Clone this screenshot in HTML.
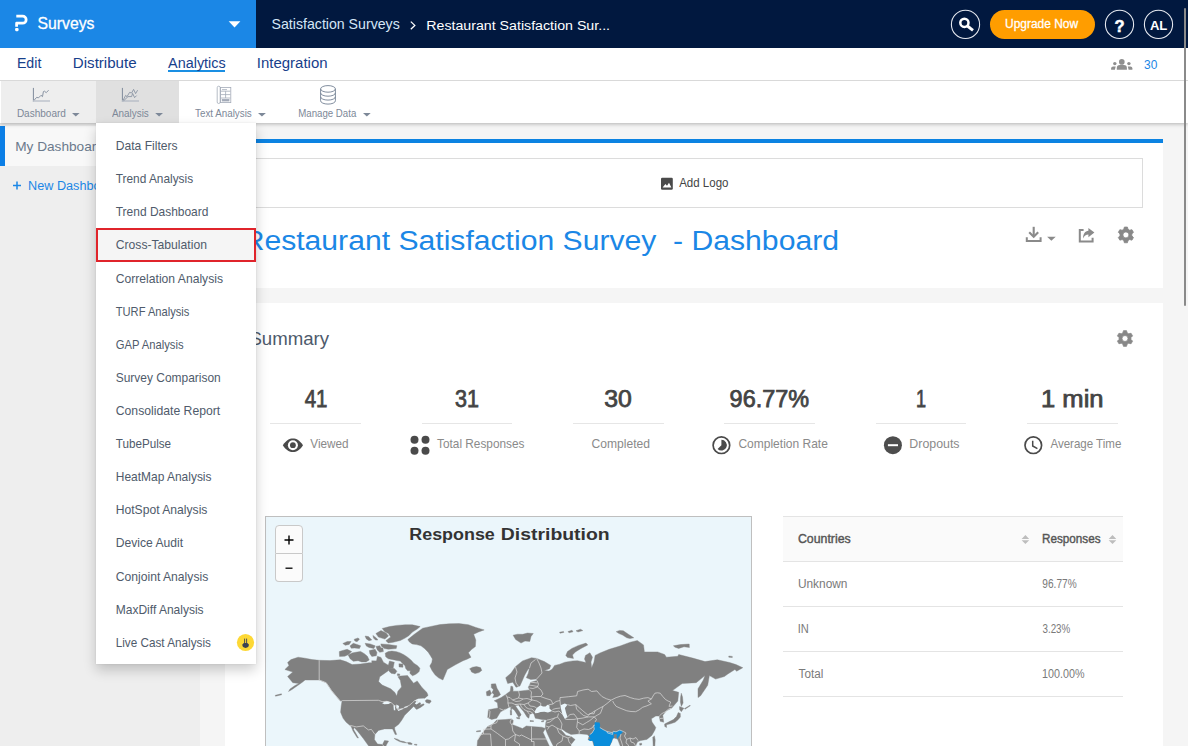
<!DOCTYPE html>
<html lang="en">
<head>
<meta charset="utf-8">
<title>Restaurant Satisfaction Survey - Dashboard</title>
<style>
*{box-sizing:border-box;margin:0;padding:0}
html,body{width:1188px;height:746px;overflow:hidden;background:#f5f5f5;font-family:"Liberation Sans",sans-serif}
.abs{position:absolute}
.t{position:absolute;white-space:pre;line-height:1;transform-origin:0 0;display:block}
#topbar{position:absolute;left:0;top:0;width:1188px;height:48px;background:#01183f}
#brand{position:absolute;left:0;top:0;width:256px;height:48px;background:#1b87e6}
#nav{position:absolute;left:0;top:48px;width:1188px;height:33px;background:#fff;border-bottom:1px solid #d9d9d9}
#toolbar{position:absolute;left:0;top:81px;width:1188px;height:42px;background:#fff;box-shadow:0 1px 4px rgba(0,0,0,.28)}
#sidebar{position:absolute;left:0;top:123px;width:200px;height:623px;background:#eeeeee}
#card1{position:absolute;left:225px;top:139px;width:938px;height:149px;background:#fff;border-top:4px solid #0c83e2}
#card2{position:absolute;left:225px;top:303px;width:938px;height:460px;background:#fff}
#logo{position:absolute;left:245px;top:158px;width:898px;height:50px;border:1px solid #dcdcdc;background:#fff}
.hr{position:absolute;height:1px;background:#e6e6e6}
#dropdown{position:absolute;left:96px;top:123px;width:160px;height:540.5px;background:#fff;box-shadow:0 6px 12px rgba(0,0,0,.2), 0 0 2px rgba(0,0,0,.08)}
#dd-sel{position:absolute;left:0;top:105px;width:160px;height:34px;background:#f5f5f5;border:2px solid #e0242b}
#map{position:absolute;left:265px;top:516px;width:487px;height:240px;background:#ebf6fb;border:1px solid #bfbfbf;overflow:hidden}
.zb{position:absolute;left:8.5px;width:28px;height:28px;background:#fbfbfb;border:1px solid #c9c9c9}
#tbl-head{position:absolute;left:783px;top:516px;width:340px;height:46px;background:#fafafa;border-top:1px solid #e4e4e4;border-bottom:1px solid #e4e4e4}
svg{position:absolute;left:0;top:0;overflow:visible}
</style>
</head>
<body>
<!-- ===== top bar ===== -->
<div id="topbar">
  <div id="brand"></div>
</div>
<!-- ===== page body backgrounds ===== -->
<div id="sidebar">
  <div class="abs" style="left:0;top:3px;width:200px;height:40px;background:#f8f8f8"></div>
  <div class="abs" style="left:0;top:3px;width:5px;height:40px;background:#0c7fe6"></div>
</div>
<div id="card1"></div>
<div id="logo"></div>
<div id="card2"></div>
<!-- stat underlines -->
<div class="hr" style="left:270px;top:423px;width:91px"></div>
<div class="hr" style="left:422px;top:423px;width:90px"></div>
<div class="hr" style="left:573px;top:423px;width:91px"></div>
<div class="hr" style="left:724px;top:423px;width:91px"></div>
<div class="hr" style="left:876px;top:423px;width:90px"></div>
<div class="hr" style="left:1027px;top:423px;width:91px"></div>
<!-- table -->
<div id="tbl-head"></div>
<div class="hr" style="left:783px;top:606px;width:340px;background:#e4e4e4"></div>
<div class="hr" style="left:783px;top:651px;width:340px;background:#e4e4e4"></div>
<div class="hr" style="left:783px;top:696px;width:340px;background:#e4e4e4"></div>
<!-- map -->
<div id="map">
<svg width="485" height="238" viewBox="266 517 485 238" style="position:absolute;left:0;top:0">
<g fill="#808080" stroke="#808080" stroke-width="0.4" stroke-linejoin="round">
<path d="M287.6 662.5L291.0 659.6L298.1 657.2L305.0 658.2L312.0 659.6L319.2 660.3L330.0 660.6L340.3 659.8L346.0 661.6L352.1 664.6L360.5 664.0L369.0 662.8L376.2 662.8L377.4 656.2L381.0 657.4L383.4 662.2L388.3 665.2L389.5 661.0L394.3 662.2L393.1 668.3L389.5 668.3L388.3 670.7L379.8 676.7L378.6 681.5L382.2 685.1L390.7 688.8L394.9 692.4L396.7 696.0L397.9 691.2L401.5 686.9L400.3 680.3L397.9 676.7L400.3 676.1L407.5 675.5L411.2 680.3L413.6 683.3L417.2 680.9L422.0 687.6L426.9 692.4L428.1 695.4L424.4 698.4L417.9 699.1L420.9 704.1L415.9 708.2L413.5 706.5L408.8 711.2L404.7 715.3L401.7 720.3L398.7 724.3L394.6 727.4L394.8 729.5L396.7 734.4L395.2 734.6L392.6 728.9L384.5 728.9L378.5 730.4L374.9 734.4L374.4 739.5L377.5 744.0L382.5 744.5L384.5 740.5L388.6 741.0L386.6 744.5L385.6 747.0L369.4 747.0L363.3 738.5L357.8 731.5L354.2 727.4L353.6 729.5L356.8 735.0L358.5 738.0L357.2 737.8L353.0 731.0L351.2 726.4L346.2 722.3L343.1 718.3L340.6 712.2L341.2 706.0L342.1 700.6L340.3 701.1L336.0 696.0L331.5 690.6L328.5 686.0L326.2 682.7L319.2 680.0L312.0 680.0L305.1 680.0L302.0 682.5L297.0 686.0L292.0 689.5L288.5 691.5L290.0 689.0L295.0 685.5L299.0 683.5L292.8 682.7L287.6 676.5L292.8 672.1L284.9 669.5L289.0 665.5z"/>
<path d="M275.3 695.3L281.4 693.8L281.6 694.8L275.5 696.2z"/>
<path d="M426.9 699.6L430.5 700.2L431.2 701.6L429.3 703.4L426.2 702.6L425.2 700.8z"/>
<path d="M415.5 708.2L418.5 705.8L423.5 703.8L424.2 704.8L420.5 707.4L416.6 709.4z"/>
<path d="M394.1 738.3L397.5 739.2L400.7 740.9L404.0 741.6L406.8 742.9L403.0 742.6L399.5 741.6L395.6 739.6z"/>
<path d="M407.3 742.6L410.0 742.4L412.2 743.6L411.8 744.6L408.5 744.2z"/>
<path d="M414.5 744.2L417.0 744.4L417.0 745.2L414.5 745.0z"/>
<path d="M382.2 628.4L389.5 626.6L396.7 625.4L405.1 624.8L412.4 624.8L420.2 626.6L417.2 629.0L412.4 632.1L408.8 635.7L405.1 638.1L400.3 640.5L393.1 642.3L388.3 642.9L385.8 640.7L390.7 636.9L388.3 633.5L384.6 631.5z"/>
<path d="M375.9 633.5L381.0 630.6L386.1 633.0L388.5 635.9L384.9 639.1L378.4 637.1z"/>
<path d="M380.8 643.9L388.3 644.5L396.9 645.7L396.2 648.6L388.3 649.2L384.4 648.6L381.4 646.2z"/>
<path d="M365.1 636.0L368.5 636.6L371.8 639.9L369.0 640.7L366.3 638.9z"/>
<path d="M372.9 635.4L376.3 637.9L377.9 640.0L375.5 640.1L373.5 638.1z"/>
<path d="M354.2 639.3L358.1 637.9L359.5 639.3L357.0 641.7L354.8 640.9z"/>
<path d="M342.8 643.5L347.2 641.5L351.1 641.5L349.2 644.4L345.3 645.3z"/>
<path d="M350.0 645.9L353.3 643.3L357.0 644.5L360.7 645.8L359.4 648.6L354.5 648.0L351.3 648.2z"/>
<path d="M365.1 643.3L370.2 643.9L375.2 645.8L373.9 648.6L369.0 647.4L366.4 646.1z"/>
<path d="M375.9 646.4L379.9 645.7L381.3 649.1L377.3 649.8z"/>
<path d="M339.3 651.6L343.6 650.2L347.2 649.3L351.7 651.6L348.6 654.6L344.8 656.2L339.5 656.4z"/>
<path d="M348.2 655.0L352.1 652.9L355.7 652.3L360.6 651.4L364.4 653.7L367.4 656.2L369.2 659.9L366.1 661.9L361.7 661.9L358.1 660.7L353.3 661.3L350.1 658.7z"/>
<path d="M369.3 650.6L375.1 649.3L377.0 652.6L376.3 655.8L371.8 656.4L369.9 653.8z"/>
<path d="M371.7 660.8L378.6 661.0L378.8 663.4L372.1 663.7z"/>
<path d="M377.4 647.5L382.9 648.0L383.4 651.6L379.8 652.3L377.6 650.2z"/>
<path d="M385.2 653.2L388.3 651.6L391.9 651.1L396.7 651.7L400.3 652.9L403.9 654.7L407.6 657.2L411.2 660.2L413.8 663.2L417.4 665.6L419.9 668.3L419.1 671.5L417.3 673.3L414.9 674.8L412.4 675.7L409.8 673.2L410.4 670.8L407.6 670.8L405.6 668.3L405.0 665.8L402.6 663.4L400.2 661.1L396.7 660.5L394.3 659.9L390.7 659.3L388.3 658.7L385.7 656.8z"/>
<path d="M398.9 663.8L402.8 664.1L403.0 667.2L399.1 667.0z"/>
<path d="M389.2 668.0L394.4 668.6L396.9 671.3L395.0 673.9L391.1 673.3L388.7 670.7z"/>
<path d="M397.4 673.8L399.8 674.0L399.6 675.7L397.4 675.5z"/>
<path d="M407.8 639.6L414.0 634.5L422.7 628.2L432.0 626.2L440.0 624.6L449.1 623.8L459.0 623.6L468.4 624.7L476.0 627.5L484.2 629.9L478.5 632.0L473.7 634.3L475.8 640.0L475.4 646.6L471.5 649.5L468.4 652.8L471.0 657.2L467.0 659.2L463.1 660.7L455.0 665.0L447.3 669.5L445.0 675.0L442.9 680.0L438.5 677.8L435.0 674.8L432.0 670.5L429.8 666.0L431.8 662.5L432.4 658.9L430.0 655.0L428.0 651.9L424.5 648.5L421.0 645.8L416.5 644.6L412.2 644.0L409.2 641.8z"/>
<path d="M469.6 668.8L472.5 667.2L476.5 666.6L480.5 667.6L481.8 670.4L479.0 672.6L475.0 673.6L471.5 672.0L470.8 670.2z"/>
<path d="M513.1 635.2L517.5 634.2L522.7 634.3L527.5 633.0L533.3 633.5L531.0 636.5L529.8 641.4L525.0 641.0L521.0 643.1L518.0 641.0L515.7 639.6z"/>
<path d="M559.6 632.2L563.5 631.4L563.8 632.4L560.0 633.2z"/>
<path d="M568.0 631.6L572.0 630.2L573.0 631.8L569.0 632.8z"/>
<path d="M576.0 630.8L580.5 629.2L582.8 630.6L578.0 632.0z"/>
<path d="M565.8 655.4L567.5 651.5L571.9 648.4L578.5 645.4L586.0 643.1L587.8 644.9L581.0 648.5L575.4 651.9L572.5 655.0L573.5 658.4L571.0 658.1L567.5 657.4z"/>
<path d="M616.2 631.7L619.5 630.4L623.3 630.8L628.0 634.0L633.8 637.8L630.0 638.6L626.8 637.8L622.5 635.0L619.0 633.6z"/>
<path d="M673.4 645.8L680.4 644.6L689.2 644.0L689.4 647.5L684.0 646.8L678.7 648.4L675.0 647.2z"/>
<path d="M728.8 656.0L732.3 656.4L732.3 657.6L728.8 657.2z"/>
<path d="M510.9 686.0L510.2 691.2L505.7 694.4L501.2 697.6L494.2 700.8L497.4 702.8L498.0 707.9L488.4 709.8L487.7 717.6L491.6 719.5L496.7 718.2L500.6 711.8L505.7 709.2L509.0 707.3L512.2 706.6L515.5 709.5L518.6 713.1L520.5 715.6L518.6 716.9L516.5 713.5L514.7 710.5L514.7 706.0L518.6 705.3L521.0 708.5L523.8 711.8L527.0 716.9L528.9 718.2L529.5 714.4L532.8 713.1L534.1 714.4L535.3 718.2L541.8 719.5L546.9 720.1L545.8 722.5L545.3 728.4L547.5 734.0L550.5 740.5L553.8 747.0L571.0 747.0L571.0 744.5L575.1 739.5L571.0 736.5L566.0 735.5L563.0 732.0L561.0 729.9L561.9 728.9L566.0 732.0L571.0 734.4L579.1 733.8L587.2 734.4L589.0 736.3L588.1 739.8L592.5 740.7L594.3 747.0L609.2 747.0L611.8 741.5L612.7 738.5L614.0 738.0L617.5 739.0L618.5 741.5L620.6 747.0L635.5 747.0L636.0 745.0L637.5 741.8L640.7 740.6L646.8 739.4L651.8 735.4L654.8 730.3L655.8 727.5L652.0 722.0L651.4 718.7L655.8 716.0L659.3 716.0L660.2 721.3L663.7 722.2L662.8 715.2L666.4 710.8L671.6 708.2L677.8 701.1L678.7 692.3L672.5 690.6L682.2 683.5L696.2 682.7L705.0 675.6L703.3 680.0L698.0 688.8L698.0 697.6L700.6 695.8L707.7 685.3L709.4 675.6L715.6 679.1L724.4 676.5L727.9 673.9L734.9 669.5L736.7 671.2L742.8 667.7L736.0 664.6L729.6 662.5L717.3 659.8L705.0 661.6L692.7 658.1L678.7 654.5L677.8 656.3L666.4 657.2L664.6 654.5L657.6 651.9L644.4 651.9L643.5 644.9L637.3 640.5L630.3 642.2L620.0 646.0L609.2 649.3L600.0 653.0L595.1 655.4L594.0 662.0L591.6 667.7L591.0 662.0L592.5 657.2L589.9 652.8L585.5 655.4L584.5 659.0L586.0 662.5L577.6 660.7L572.7 660.9L564.9 662.2L559.8 664.2L554.6 665.4L552.1 669.3L549.0 671.0L544.4 670.6L549.5 668.7L550.8 665.4L544.4 661.6L536.6 658.4L531.5 657.7L522.5 660.9L515.4 666.7L510.9 673.2L505.7 677.7L507.7 683.5L512.8 682.2L516.0 687.3L519.9 686.0L522.5 680.2L524.4 675.7L527.6 669.9L529.5 668.0L528.3 673.2L526.3 677.7L530.8 679.6L536.6 679.0L537.0 680.5L530.8 682.2L528.3 687.3L529.5 689.9L518.6 691.2L512.8 691.2L513.2 689.9L512.8 686.7z"/>
<path d="M491.3 684.0L495.6 683.8L497.0 688.3L499.1 691.8L500.5 694.7L497.7 696.8L492.7 697.5L494.1 694.7L492.0 692.6L493.4 689.7L491.3 687.6z"/>
<path d="M486.3 691.8L489.9 690.0L491.3 693.3L489.9 695.7L486.8 695.7z"/>
<path d="M511.2 706.8L515.5 706.0L519.0 711.0L521.1 714.6L519.7 716.7L518.3 713.9L514.7 710.3L512.6 708.9z"/>
<path d="M516.5 717.4L519.8 717.6L519.5 719.0L516.8 718.4z"/>
<path d="M510.3 710.2L511.6 710.4L511.6 715.0L510.4 715.0z"/>
<path d="M510.8 707.2L511.8 707.2L511.8 709.6L510.8 709.6z"/>
<path d="M530.0 720.6L533.5 720.8L533.5 721.5L530.0 721.4z"/>
<path d="M541.5 721.0L544.0 720.6L543.5 721.8L541.5 721.8z"/>
<path d="M496.7 720.1L505.7 719.5L511.5 718.9L513.5 720.8L512.2 724.6L516.0 725.9L522.5 728.5L526.3 725.9L531.5 726.6L541.8 727.2L545.3 728.4L543.1 732.4L546.5 740.0L549.8 747.0L477.0 747.0L477.6 740.5L482.1 733.4L487.7 726.4L492.9 724.0z"/>
<path d="M476.5 731.0L480.5 730.6L480.5 731.5L476.5 731.8z"/>
<path d="M681.3 693.2L682.5 697.0L683.1 702.9L681.3 706.4L680.4 702.0L680.6 697.0z"/>
<path d="M679.5 706.6L683.9 708.2L682.5 710.0L681.3 711.7L679.6 709.6z"/>
<path d="M678.2 712.6L680.3 713.4L680.4 716.9L678.0 719.8L675.1 722.2L670.5 723.8L666.4 724.8L666.6 727.5L664.8 726.6L664.6 724.0L669.0 721.8L673.4 719.6L676.5 716.5z"/>
<path d="M684.5 708.6L690.0 705.2L690.3 705.8L685.0 709.2z"/>
<path d="M652.8 737.4L654.4 735.8L655.2 740.0L654.8 747.0L653.2 747.0z"/>
<path d="M639.6 743.4L641.6 743.2L641.6 745.0L639.8 745.2z"/>
</g>
<path d="M594.3 724.8L595.1 722.2L599.5 722.6L600.2 725.0L599.8 727.5L603.0 729.5L607.0 731.5L612.7 732.8L613.2 731.3L616.0 731.8L619.8 730.1L623.3 731.5L621.0 734.0L618.9 736.5L617.5 739.0L616.5 737.0L617.0 734.5L614.5 734.0L613.6 735.5L614.0 738.0L612.7 738.5L611.8 741.5L609.2 747.0L594.3 747.0L593.5 742.5L592.5 740.7L590.0 741.0L588.1 739.8L590.5 738.5L589.0 736.3L589.9 734.5L592.0 733.0L594.3 729.2L593.8 726.5z" fill="#0a8ddb"/>
<g fill="#ebf6fb">
<path d="M382.1 703.2L384.5 701.8L387.0 701.1L391.3 702.5L388.5 703.9L384.2 704.2z"/>
<path d="M393.4 705.3L394.9 705.3L395.3 710.3L393.9 710.3z"/>
<path d="M396.3 704.6L399.1 706.0L398.4 708.9L396.3 708.2z"/>
<path d="M397.7 709.9L402.7 708.2L403.0 709.1L398.4 710.9z"/>
<path d="M404.1 707.0L407.6 706.0L407.8 706.9L404.5 707.9z"/>
<path d="M414.5 700.8L418.0 698.8L424.6 698.4L422.5 701.0L419.5 702.5L416.5 704.6L414.8 703.4L416.5 701.6z"/>
<path d="M534.6 711.8L536.6 707.9L540.5 705.3L543.0 706.5L545.6 706.6L547.5 704.8L549.5 705.6L549.5 708.6L552.1 711.1L548.0 712.4L544.4 711.8L540.5 712.0L537.9 713.1L535.2 713.2z"/>
<path d="M560.4 705.3L564.9 703.4L567.5 704.7L564.9 707.9L566.0 712.5L567.5 716.9L564.9 718.9L562.4 714.4L561.1 709.2z"/>
</g>
<g fill="none" stroke="#dcdcdc" stroke-width="0.7" stroke-linejoin="round">
<path d="M319.2 660.3L319.2 680.0L322.0 681.0L326.2 682.7L328.5 686.0L331.5 690.6L336.0 696.0L340.3 701.1"/>
<path d="M342.1 700.6L378.5 700.3L382.1 701.6L387.0 701.3L391.3 702.8L394.2 705.3L396.5 706.5L397.5 709.5L402.8 708.6L406.0 707.0L409.5 705.2L412.6 702.5L414.5 700.8L416.9 699.9L418.2 702.8"/>
<path d="M350.2 725.4L356.3 726.9L363.3 725.9L368.4 729.9L371.4 729.4L374.9 734.4"/>
<path d="M382.5 744.5L384.0 746.5"/>
<path d="M515.4 666.7L517.0 672.0L515.0 678.0L516.0 683.0L518.5 686.5"/>
<path d="M529.5 668.0L531.0 663.0L535.5 659.5"/>
<path d="M536.6 658.4L539.0 663.0L541.0 668.0L542.0 673.0L538.5 677.0L536.6 679.0"/>
<path d="M537.0 680.5L538.5 684.0L537.5 687.0L541.0 690.0L543.0 694.0L540.5 696.5L546.0 698.5L551.0 700.0L553.0 704.0L548.5 704.8"/>
<path d="M530.8 682.2L537.5 683.0"/>
<path d="M529.0 685.0L538.0 686.5"/>
<path d="M529.5 688.0L533.0 688.5L537.5 687.0"/>
<path d="M529.5 689.9L531.5 692.0L531.0 697.0L532.0 700.0"/>
<path d="M518.6 691.2L519.5 695.0L518.5 698.0"/>
<path d="M518.5 698.0L523.0 699.0L527.0 698.5L532.0 700.0L537.0 701.0L541.0 703.5L540.5 705.3"/>
<path d="M531.0 697.0L536.0 696.5L540.5 696.5"/>
<path d="M505.7 694.4L507.0 697.0L508.0 700.0L507.9 703.0L509.0 707.3"/>
<path d="M507.0 697.0L510.0 697.5L512.5 700.0L518.5 698.0"/>
<path d="M507.9 703.0L512.0 703.0L515.0 704.5L518.6 705.3"/>
<path d="M512.5 700.0L516.0 701.5L520.0 701.0L523.0 699.0"/>
<path d="M515.0 704.5L520.0 704.0L524.0 704.5L528.0 703.0L532.0 700.0"/>
<path d="M520.0 704.0L521.5 707.0L524.0 709.5L527.0 711.0L529.5 714.4"/>
<path d="M524.0 704.5L526.0 707.5L529.0 709.0L532.0 709.0L534.6 711.8"/>
<path d="M528.0 703.0L530.0 706.0L534.0 706.5L536.6 707.9"/>
<path d="M527.0 711.0L530.0 711.5L532.8 713.1"/>
<path d="M488.4 709.8L490.0 711.5L489.5 717.0L488.5 718.0"/>
<path d="M499.5 708.6L503.5 710.2L505.7 709.2"/>
<path d="M552.1 711.1L555.0 712.0L559.0 711.0L562.4 714.4"/>
<path d="M552.5 709.5L556.0 708.5L560.4 708.0"/>
<path d="M546.9 720.1L550.0 719.5L554.8 718.0L557.5 717.0L558.5 713.5"/>
<path d="M557.5 717.0L560.0 720.0L562.0 724.0L561.0 729.9"/>
<path d="M546.5 723.0L550.0 722.0L554.8 718.0"/>
<path d="M546.0 726.0L549.0 727.0L552.0 725.0L557.0 728.0L561.0 729.9"/>
<path d="M549.0 727.0L547.5 729.5"/>
<path d="M557.0 728.0L559.0 733.0L563.0 736.0L568.0 738.0L571.0 736.5"/>
<path d="M563.0 736.0L562.0 741.0L557.0 744.0L556.0 747.0"/>
<path d="M568.0 738.0L569.0 742.0L571.0 744.5"/>
<path d="M553.0 704.0L556.0 701.5L560.0 700.5L560.0 697.6L568.8 696.7L576.7 695.8L577.6 691.5L583.0 690.0L588.1 689.2L591.6 691.5L596.9 690.9L599.5 694.0L602.2 696.7L606.5 698.8L611.0 700.2"/>
<path d="M560.0 700.5L560.4 705.3"/>
<path d="M567.5 704.7L570.5 705.5L575.8 704.6L579.0 707.5L582.8 710.8L588.1 715.2L591.5 713.0L595.1 710.8L599.0 708.5L603.1 706.4L607.0 703.5L611.0 700.2"/>
<path d="M567.5 716.9L570.0 714.5L574.0 714.0L577.6 718.7L582.0 718.2L588.1 716.9L594.3 716.9"/>
<path d="M575.8 704.6L576.5 709.0L580.0 712.5L583.5 715.5L588.1 716.9"/>
<path d="M564.9 718.9L567.0 719.5L574.0 719.4L577.6 718.7"/>
<path d="M577.6 718.7L577.6 720.5L576.7 727.5L579.3 731.0L579.1 733.8"/>
<path d="M577.6 722.0L582.8 724.8L586.5 722.5L589.9 720.5L594.3 716.9"/>
<path d="M579.3 731.0L584.0 729.0L588.5 729.5L592.0 728.0L594.3 724.8"/>
<path d="M588.1 715.2L590.0 713.5L594.0 713.8L595.1 710.8"/>
<path d="M603.1 706.4L600.4 713.4L597.5 715.0L594.3 716.9L596.5 719.5L595.1 721.9"/>
<path d="M611.0 700.2L616.2 697.6L620.5 696.2L625.0 695.5L630.3 697.6L634.5 698.8L639.1 699.4L643.5 698.2L647.9 697.6L651.4 699.0L647.9 701.1L651.4 703.8L647.0 705.8L642.6 707.3L639.0 710.0L635.6 711.7L631.0 711.5L626.8 710.8L621.0 708.5L616.2 706.4L614.0 703.5L612.7 701.1"/>
<path d="M651.4 699.0L653.0 696.0L654.9 693.2L657.5 692.8L660.2 693.2L662.8 696.5L665.4 699.4L668.0 701.0L670.7 702.0L669.0 706.4L672.5 706.0"/>
<path d="M659.3 716.0L662.0 713.5L666.0 711.5L668.5 709.0L671.6 708.2"/>
<path d="M660.0 718.5L663.2 718.2"/>
<path d="M599.8 727.5L603.0 729.5L607.0 731.5L612.7 732.8L613.2 731.3L616.0 731.8L619.8 730.1L623.3 731.5L626.0 733.0L624.5 736.0L626.5 739.5L630.0 738.0L633.0 739.0L636.0 737.5L638.0 740.5"/>
<path d="M607.0 731.5L607.5 733.0L612.7 734.4L612.7 732.8"/>
<path d="M621.0 734.0L620.0 738.0L621.5 742.0L623.0 747.0"/>
<path d="M626.5 739.5L626.0 743.0L628.5 745.0L628.0 747.0"/>
<path d="M630.0 738.0L631.0 742.0L634.0 743.0L636.0 747.0"/>
<path d="M589.9 734.5L592.0 733.0L594.3 729.2L593.8 726.5L594.3 724.8"/>
<path d="M487.7 726.4L491.0 726.0L492.0 724.2L496.5 722.8L497.8 720.1"/>
<path d="M491.0 726.0L491.0 729.0L483.5 729.2L483.5 734.0L480.0 735.0L478.0 739.5"/>
<path d="M491.0 729.0L497.5 733.5L505.5 739.5L508.5 739.0"/>
<path d="M483.5 734.0L490.5 734.0L491.5 747.0"/>
<path d="M508.5 739.0L513.5 735.5L515.5 734.5"/>
<path d="M511.5 718.9L510.0 722.0L512.0 725.5L512.8 731.0L515.5 734.5L519.5 736.0L521.5 735.0"/>
<path d="M512.2 724.6L513.5 723.0L513.5 720.8"/>
<path d="M521.5 735.0L531.5 740.0L531.5 741.5L534.0 741.5"/>
<path d="M531.5 726.6L531.5 741.5"/>
<path d="M531.5 739.0L548.0 739.0"/>
<path d="M505.5 739.5L505.5 747.0"/>
<path d="M515.5 734.5L514.5 741.0L519.5 744.0L519.5 747.0"/>
<path d="M534.0 741.5L534.0 747.0"/>
</g>
</svg>
  <div class="zb" style="top:8.3px;height:28.5px;border-radius:4px 4px 0 0"></div>
  <div class="zb" style="top:36.8px;border-radius:0 0 4px 4px;border-top:none;height:28px"></div>
</div>
<!-- ===== toolbar (over body so its shadow shows) ===== -->
<div id="toolbar">
  <div class="abs" style="left:1px;top:0;width:95px;height:42px;background:#eeeeee"></div>
  <div class="abs" style="left:96px;top:0;width:83px;height:42px;background:#e0e0e0"></div>
</div>
<!-- ===== nav tabs ===== -->
<div id="nav"></div>
<div class="abs" style="left:168px;top:70px;width:57px;height:2px;background:#1a8fe3"></div>
<!-- ===== icons (single svg overlay) ===== -->
<svg width="1188" height="746" viewBox="0 0 1188 746" id="icons">
<!-- P logo -->
<path d="M16.3 16.1H22.6a3.55 3.55 0 0 1 0 7.1H16.6V26.7" fill="none" stroke="#fff" stroke-width="2.75" stroke-linejoin="round"/>
<rect x="15.1" y="27.9" width="3.5" height="3.3" rx="1.1" fill="#fff"/>
<!-- brand caret -->
<path d="M228.7 21.3H240.4L234.55 27.4z" fill="#fff"/>
<!-- breadcrumb chevron -->
<path d="M410.8 21.6L414.8 25.4L410.8 29.2" fill="none" stroke="#fff" stroke-width="1.3"/>
<!-- search -->
<circle cx="965.5" cy="24.4" r="14.1" fill="none" stroke="#e6e9f0" stroke-width="1.1"/>
<circle cx="964.4" cy="22.8" r="4.1" fill="none" stroke="#fff" stroke-width="2.5"/>
<path d="M967.4 26L973 30.4" stroke="#fff" stroke-width="2.9" stroke-linecap="butt"/>
<!-- upgrade button -->
<rect x="990" y="10" width="105" height="29" rx="14.5" fill="#ff9d00"/>
<!-- help -->
<circle cx="1119.5" cy="24.4" r="14.1" fill="none" stroke="#e6e9f0" stroke-width="1.1"/>
<text x="1119.5" y="32" font-family="Liberation Sans, sans-serif" font-weight="700" font-size="16.5" fill="#fff" stroke="#fff" stroke-width="0.5" text-anchor="middle">?</text>
<!-- avatar -->
<circle cx="1158.5" cy="24.4" r="14.1" fill="none" stroke="#e6e9f0" stroke-width="1.1"/>
<!-- people -->
<g fill="#8e8e8e">
<circle cx="1121.8" cy="61.9" r="2.8"/>
<path d="M1116.8 69.7V68a3 3 0 0 1 3-3h4.1a3 3 0 0 1 3 3v1.7z"/>
<circle cx="1114.8" cy="63.6" r="1.7"/>
<circle cx="1128.9" cy="63.6" r="1.7"/>
<path d="M1111.1 69.7V68.5a2 2 0 0 1 2-2h2.6l-0.8 3.2z"/>
<path d="M1132.4 69.7V68.5a2 2 0 0 0-2-2h-2.6l0.8 3.2z"/>
</g>
<!-- toolbar: dashboard icon -->
<g fill="none" stroke="#7f8a9b" stroke-width="0.9">
<path d="M33.4 87.9V102" stroke-width="1"/>
<path d="M33 101H50" stroke="#c6cad2" stroke-width="1.8"/>
<path d="M34 100.4L36.6 97.4L38.6 97.8L41 95.3L42.5 96.6L43.4 91.6L44.6 91.2L46.2 92.7L48.6 90.2"/>
</g>
<!-- toolbar: analysis icon -->
<g fill="none" stroke="#7f8a9b" stroke-width="0.8">
<path d="M122.4 87.9V102" stroke-width="1"/>
<path d="M122 101H139" stroke="#c0c4cc" stroke-width="1.8"/>
<path d="M123 100.6L125.6 95.4L127 96.6L129.6 92.4L131.6 93L133.6 89.4L135.6 93.6L137.6 90.2"/>
<path d="M123.6 100.8L128 96.6H131.6L132.6 93.4L134.6 97.6L136.6 95.6"/>
</g>
<!-- toolbar: text analysis icon -->
<g fill="none" stroke="#a3abb8" stroke-width="0.8">
<rect x="217.2" y="86.2" width="3" height="17.3" rx="1.5"/>
<rect x="220.4" y="87.4" width="10.4" height="15.2"/>
<path d="M222 89.6H227M221 91.2H230.4M221 98H230.4M225.6 91.2V98M221 94.6H230.4"/>
<rect x="222.2" y="99.4" width="6.8" height="1.6" fill="#a3abb8"/>
</g>
<!-- toolbar: manage data icon -->
<g fill="none" stroke="#7a8799" stroke-width="0.95">
<ellipse cx="328" cy="88.9" rx="7.4" ry="3.3"/>
<path d="M320.6 88.9V100.8M335.4 88.9V100.8"/>
<path d="M320.6 92.9a7.4 3.3 0 0 0 14.8 0M320.6 96.8a7.4 3.3 0 0 0 14.8 0M320.6 100.8a7.4 3.3 0 0 0 14.8 0"/>
</g>
<!-- toolbar carets -->
<g fill="#7d8898">
<path d="M72 112.9H79.6L75.8 116.5z"/>
<path d="M155.2 112.9H163L159.1 116.5z"/>
<path d="M258 112.9H265.9L261.95 116.5z"/>
<path d="M363 112.9H370.7L366.85 116.5z"/>
</g>
<!-- sidebar plus -->
<path d="M13 185.6H21M17 181.6V189.6" stroke="#1b87e6" stroke-width="1.5" fill="none"/>
<!-- add logo icon -->
<rect x="661" y="177.8" width="11.8" height="12" rx="1.2" fill="#4a4a4a"/>
<path d="M662.6 187.6L665.4 184L667 185.8L669 182.8L671.4 187.6z" fill="#fff"/>
<!-- download -->
<g fill="none" stroke="#8a8a8a" stroke-width="2.1">
<path d="M1033.7 226.8V236"/>
<path d="M1029.2 232.2L1033.7 236.7L1038.2 232.2"/>
<path d="M1026.8 237.2V241H1040.6V237.2" stroke-width="2"/>
</g>
<path d="M1047.1 236.8H1055.7L1051.4 240.7z" fill="#8a8a8a"/>
<!-- share -->
<g fill="none" stroke="#8a8a8a" stroke-width="2">
<path d="M1083.6 230H1079.8V241.6H1092.6V237.8"/>
</g>
<path d="M1088.4 228L1094.4 232.6L1088.4 237.2V234.4C1086 234.4 1084.2 235.6 1083 238.4C1083.2 233.8 1085 231.2 1088.4 230.8z" fill="#8a8a8a"/>
<!-- gears -->
<path d="M1128.05 229.30L1127.43 227.05L1124.37 227.05L1123.75 229.30L1122.12 230.24L1119.86 229.65L1118.34 232.30L1119.97 233.96L1119.97 235.84L1118.34 237.50L1119.86 240.15L1122.12 239.56L1123.75 240.50L1124.37 242.75L1127.43 242.75L1128.05 240.50L1129.68 239.56L1131.94 240.15L1133.46 237.50L1131.83 235.84L1131.83 233.96L1133.46 232.30L1131.94 229.65L1129.68 230.24zM1122.90 234.90a3.0 3.0 0 1 0 6.0 0a3.0 3.0 0 1 0 -6.0 0z" fill="#888" fill-rule="evenodd" stroke="#888" stroke-width="0.8" stroke-linejoin="round"/>
<path d="M1127.15 332.90L1126.53 330.65L1123.47 330.65L1122.85 332.90L1121.22 333.84L1118.96 333.25L1117.44 335.90L1119.07 337.56L1119.07 339.44L1117.44 341.10L1118.96 343.75L1121.22 343.16L1122.85 344.10L1123.47 346.35L1126.53 346.35L1127.15 344.10L1128.78 343.16L1131.04 343.75L1132.56 341.10L1130.93 339.44L1130.93 337.56L1132.56 335.90L1131.04 333.25L1128.78 333.84zM1122.00 338.50a3.0 3.0 0 1 0 6.0 0a3.0 3.0 0 1 0 -6.0 0z" fill="#888" fill-rule="evenodd" stroke="#888" stroke-width="0.8" stroke-linejoin="round"/>
<!-- eye -->
<path d="M282.8 445.2C286 440.2 289.4 438.4 292.9 438.4S299.8 440.2 303 445.2C299.8 450.2 296.4 452 292.9 452S286 450.2 282.8 445.2z" fill="#4a4a4a"/>
<circle cx="292.9" cy="445.2" r="5" fill="#fff"/>
<circle cx="292.9" cy="445.2" r="2.9" fill="#4a4a4a"/>
<!-- 4 dots -->
<g fill="#4a4a4a"><circle cx="414.5" cy="439.7" r="4"/><circle cx="425.5" cy="439.7" r="4"/><circle cx="414.5" cy="450.7" r="4"/><circle cx="425.5" cy="450.7" r="4"/></g>
<!-- completion -->
<circle cx="721.4" cy="445.2" r="8.3" fill="none" stroke="#4a4a4a" stroke-width="1.7"/>
<path d="M721.4 445.2V439.8A5.4 5.4 0 1 1 717.6 449z" fill="#4a4a4a"/>
<!-- dropouts -->
<circle cx="892.9" cy="445.2" r="9" fill="#4d4d4d"/>
<rect x="887.9" y="444.2" width="10.1" height="2" fill="#fff"/>
<!-- clock -->
<circle cx="1033.3" cy="445.2" r="8.3" fill="none" stroke="#4a4a4a" stroke-width="1.7"/>
<path d="M1032.7 440.8V446L1037.4 448.6" fill="none" stroke="#4a4a4a" stroke-width="1.5"/>
<!-- sort icons -->
<g fill="#bdbdbd">
<path d="M1021.6 539H1029.2L1025.4 534.9zM1021.6 540.2H1029.2L1025.4 544z"/>
<path d="M1108.7 539H1116.3L1112.5 534.9zM1108.7 540.2H1116.3L1112.5 544z"/>
</g>
<!-- zoom +/- -->
<path d="M284.5 540H293.5M289 535.5V544.5" stroke="#000" stroke-width="1.4" fill="none"/>
<path d="M285.5 568.2H292.5" stroke="#000" stroke-width="1.3" fill="none"/>

</svg>
<!-- ===== text ===== -->
<span class="t" style="left:37px;top:14px;line-height:18px;font-size:16.5px;font-weight:400;color:#fff;transform:translateX(0.51px) scaleX(0.9561);-webkit-text-stroke:0.3px #fff;">Surveys</span>
<span class="t" style="left:271px;top:16px;line-height:16px;font-size:14.8px;font-weight:400;color:#d5e6f7;transform:translateX(0.56px) scaleX(0.9560);">Satisfaction Surveys</span>
<span class="t" style="left:426px;top:18px;line-height:15px;font-size:13.7px;font-weight:400;color:#fff;transform:translateX(0.29px) scaleX(1.0364);">Restaurant Satisfaction Sur...</span>
<span class="t" style="left:1005px;top:17px;line-height:14px;font-size:12.5px;font-weight:400;color:#fff;transform:translateX(0.09px) scaleX(0.9556);-webkit-text-stroke:0.3px #fff;">Upgrade Now</span>
<span class="t" style="left:1149px;top:19px;line-height:14px;font-size:12.7px;font-weight:700;color:#fff;transform:translateX(0.89px) scaleX(1.0325);">AL</span>
<span class="t" style="left:16px;top:55px;line-height:16px;font-size:14px;font-weight:400;color:#17408b;transform:translateX(0.89px) scaleX(1.0139);">Edit</span>
<span class="t" style="left:72px;top:55px;line-height:16px;font-size:14px;font-weight:400;color:#17408b;transform:translateX(0.82px) scaleX(1.0788);">Distribute</span>
<span class="t" style="left:168px;top:55px;line-height:16px;font-size:14px;font-weight:400;color:#17408b;transform:translateX(0.10px) scaleX(1.0273);">Analytics</span>
<span class="t" style="left:256px;top:55px;line-height:16px;font-size:14px;font-weight:400;color:#17408b;transform:translateX(0.83px) scaleX(1.0688);">Integration</span>
<span class="t" style="left:1144px;top:58px;line-height:14px;font-size:12.5px;font-weight:400;color:#1b87e6;transform:translateX(0.07px) scaleX(0.9537);">30</span>
<span class="t" style="left:16px;top:107px;line-height:12px;font-size:11px;font-weight:400;color:#7d8898;transform:translateX(0.88px) scaleX(0.9111);">Dashboard</span>
<span class="t" style="left:112px;top:107px;line-height:12px;font-size:11px;font-weight:400;color:#7d8898;transform:translateX(0.00px) scaleX(0.8988);">Analysis</span>
<span class="t" style="left:195px;top:107px;line-height:12px;font-size:11px;font-weight:400;color:#7d8898;transform:translateX(0.02px) scaleX(0.8925);">Text Analysis</span>
<span class="t" style="left:298px;top:107px;line-height:12px;font-size:11px;font-weight:400;color:#7d8898;transform:translateX(0.21px) scaleX(0.8792);">Manage Data</span>
<span class="t" style="left:15px;top:139px;line-height:15px;font-size:13px;font-weight:400;color:#6b7a8c;transform:translateX(0.24px) scaleX(1.0484);">My Dashboard</span>
<span class="t" style="left:28px;top:179px;line-height:14px;font-size:12px;font-weight:400;color:#1b87e6;transform:translateX(0.10px) scaleX(1.0549);">New Dashboard</span>
<span class="t" style="left:679px;top:176px;line-height:14px;font-size:12.2px;font-weight:400;color:#444;transform:translateX(0.20px) scaleX(0.9430);">Add Logo</span>
<span class="t" style="left:242px;top:224px;line-height:32px;font-size:28.2px;font-weight:400;color:#1b87e6;transform:translateX(0.64px) scaleX(1.0691);">Restaurant Satisfaction Survey  - Dashboard</span>
<span class="t" style="left:249px;top:329px;line-height:20px;font-size:17.5px;font-weight:400;color:#4d5a6b;transform:translateX(0.42px) scaleX(1.0643);">Summary</span>
<span class="t" style="left:304px;top:386px;line-height:26px;font-size:23px;font-weight:400;color:#444;transform:translateX(0.68px) scaleX(0.8892);-webkit-text-stroke:0.75px #444;">41</span>
<span class="t" style="left:455px;top:386px;line-height:26px;font-size:23px;font-weight:400;color:#444;transform:translateX(0.03px) scaleX(0.9360);-webkit-text-stroke:0.75px #444;">31</span>
<span class="t" style="left:604px;top:386px;line-height:26px;font-size:23px;font-weight:400;color:#444;transform:translateX(0.22px) scaleX(1.0786);-webkit-text-stroke:0.75px #444;">30</span>
<span class="t" style="left:729px;top:386px;line-height:26px;font-size:23px;font-weight:400;color:#444;transform:translateX(0.60px) scaleX(1.0191);-webkit-text-stroke:0.75px #444;">96.77%</span>
<span class="t" style="left:915px;top:386px;line-height:26px;font-size:23px;font-weight:400;color:#444;transform:translateX(0.97px) scaleX(0.7868);-webkit-text-stroke:0.75px #444;">1</span>
<span class="t" style="left:1041px;top:386px;line-height:26px;font-size:23px;font-weight:400;color:#444;transform:translateX(0.00px) scaleX(1.1119);-webkit-text-stroke:0.75px #444;">1 min</span>
<span class="t" style="left:310px;top:436px;line-height:15px;font-size:13.4px;font-weight:400;color:#8a8a8a;transform:translateX(0.30px) scaleX(0.8753);">Viewed</span>
<span class="t" style="left:437px;top:436px;line-height:15px;font-size:13.4px;font-weight:400;color:#8a8a8a;transform:translateX(0.12px) scaleX(0.8818);">Total Responses</span>
<span class="t" style="left:591px;top:436px;line-height:15px;font-size:13.4px;font-weight:400;color:#8a8a8a;transform:translateX(0.53px) scaleX(0.9035);">Completed</span>
<span class="t" style="left:738px;top:436px;line-height:15px;font-size:13.4px;font-weight:400;color:#8a8a8a;transform:translateX(0.44px) scaleX(0.8962);">Completion Rate</span>
<span class="t" style="left:909px;top:436px;line-height:15px;font-size:13.4px;font-weight:400;color:#8a8a8a;transform:translateX(0.33px) scaleX(0.9243);">Dropouts</span>
<span class="t" style="left:1050px;top:436px;line-height:15px;font-size:13.4px;font-weight:400;color:#8a8a8a;transform:translateX(0.40px) scaleX(0.8609);">Average Time</span>
<span class="t" style="left:409px;top:524px;line-height:20px;font-size:17.2px;font-weight:700;color:#333;transform:translateX(0.28px) scaleX(1.0409);">Response</span>
<span class="t" style="left:500px;top:524px;line-height:20px;font-size:17.2px;font-weight:700;color:#333;transform:translateX(0.79px) scaleX(1.1291);">Distribution</span>
<span class="t" style="left:797px;top:532px;line-height:14px;font-size:12.5px;font-weight:400;color:#555;transform:translateX(0.91px) scaleX(0.9877);-webkit-text-stroke:0.4px #555;">Countries</span>
<span class="t" style="left:1041px;top:532px;line-height:14px;font-size:12.5px;font-weight:400;color:#555;transform:translateX(0.96px) scaleX(0.9364);-webkit-text-stroke:0.4px #555;">Responses</span>
<span class="t" style="left:797px;top:577px;line-height:14px;font-size:12.5px;font-weight:400;color:#7a7a7a;transform:translateX(0.90px) scaleX(0.9512);">Unknown</span>
<span class="t" style="left:1042px;top:577px;line-height:14px;font-size:12.5px;font-weight:400;color:#7a7a7a;transform:translateX(0.36px) scaleX(0.8086);">96.77%</span>
<span class="t" style="left:797px;top:622px;line-height:14px;font-size:12.5px;font-weight:400;color:#7a7a7a;transform:translateX(0.78px) scaleX(0.8869);">IN</span>
<span class="t" style="left:1042px;top:622px;line-height:14px;font-size:12.5px;font-weight:400;color:#7a7a7a;transform:translateX(0.45px) scaleX(0.7866);">3.23%</span>
<span class="t" style="left:798px;top:667px;line-height:14px;font-size:12.5px;font-weight:400;color:#7a7a7a;transform:translateX(0.57px) scaleX(0.9358);">Total</span>
<span class="t" style="left:1041px;top:667px;line-height:14px;font-size:12.5px;font-weight:400;color:#7a7a7a;transform:translateX(0.98px) scaleX(0.8607);">100.00%</span>
<!-- ===== dropdown ===== -->
<div id="dropdown">
  <div id="dd-sel"></div>
<span class="t" style="left:19px;top:15px;line-height:15px;font-size:13px;font-weight:400;color:#4f5b6b;transform:translateX(0.75px) scaleX(0.9302);">Data Filters</span>
<span class="t" style="left:19px;top:48px;line-height:15px;font-size:13px;font-weight:400;color:#4f5b6b;transform:translateX(0.75px) scaleX(0.9118);">Trend Analysis</span>
<span class="t" style="left:19px;top:81px;line-height:15px;font-size:13px;font-weight:400;color:#4f5b6b;transform:translateX(0.75px) scaleX(0.9203);">Trend Dashboard</span>
<span class="t" style="left:19px;top:114px;line-height:15px;font-size:13px;font-weight:400;color:#4f5b6b;transform:translateX(0.75px) scaleX(0.9345);">Cross-Tabulation</span>
<span class="t" style="left:19px;top:148px;line-height:15px;font-size:13px;font-weight:400;color:#4f5b6b;transform:translateX(0.75px) scaleX(0.9338);">Correlation Analysis</span>
<span class="t" style="left:19px;top:181px;line-height:15px;font-size:13px;font-weight:400;color:#4f5b6b;transform:translateX(0.75px) scaleX(0.8563);">TURF Analysis</span>
<span class="t" style="left:19px;top:214px;line-height:15px;font-size:13px;font-weight:400;color:#4f5b6b;transform:translateX(0.75px) scaleX(0.8629);">GAP Analysis</span>
<span class="t" style="left:19px;top:247px;line-height:15px;font-size:13px;font-weight:400;color:#4f5b6b;transform:translateX(0.75px) scaleX(0.9193);">Survey Comparison</span>
<span class="t" style="left:19px;top:280px;line-height:15px;font-size:13px;font-weight:400;color:#4f5b6b;transform:translateX(0.75px) scaleX(0.9384);">Consolidate Report</span>
<span class="t" style="left:19px;top:313px;line-height:15px;font-size:13px;font-weight:400;color:#4f5b6b;transform:translateX(0.75px) scaleX(0.8976);">TubePulse</span>
<span class="t" style="left:19px;top:346px;line-height:15px;font-size:13px;font-weight:400;color:#4f5b6b;transform:translateX(0.75px) scaleX(0.9202);">HeatMap Analysis</span>
<span class="t" style="left:19px;top:379px;line-height:15px;font-size:13px;font-weight:400;color:#4f5b6b;transform:translateX(0.75px) scaleX(0.9327);">HotSpot Analysis</span>
<span class="t" style="left:19px;top:412px;line-height:15px;font-size:13px;font-weight:400;color:#4f5b6b;transform:translateX(0.75px) scaleX(0.9318);">Device Audit</span>
<span class="t" style="left:19px;top:446px;line-height:15px;font-size:13px;font-weight:400;color:#4f5b6b;transform:translateX(0.75px) scaleX(0.9341);">Conjoint Analysis</span>
<span class="t" style="left:19px;top:479px;line-height:15px;font-size:13px;font-weight:400;color:#4f5b6b;transform:translateX(0.75px) scaleX(0.9235);">MaxDiff Analysis</span>
<span class="t" style="left:19px;top:512px;line-height:15px;font-size:13px;font-weight:400;color:#4f5b6b;transform:translateX(0.75px) scaleX(0.9018);">Live Cast Analysis</span>
  <svg width="160" height="540" viewBox="96 123 160 540">
    <circle cx="245.5" cy="642.5" r="8.6" fill="#fdd835"/>
    <path d="M244.6 638.6V643.2M246.6 638.6V643.2" stroke="#3b4252" stroke-width="0.9" fill="none"/>
    <path d="M242.3 644.6a3.3 3.3 0 0 0 6.6 0l-1.6-1.6h-3.4z" fill="#3b4252"/>
  </svg>
</div>
<!-- scrollbar -->
<div class="abs" style="left:1184px;top:8px;width:2px;height:298px;background:#8a8a8a;border-radius:1px"></div>
</body>
</html>
